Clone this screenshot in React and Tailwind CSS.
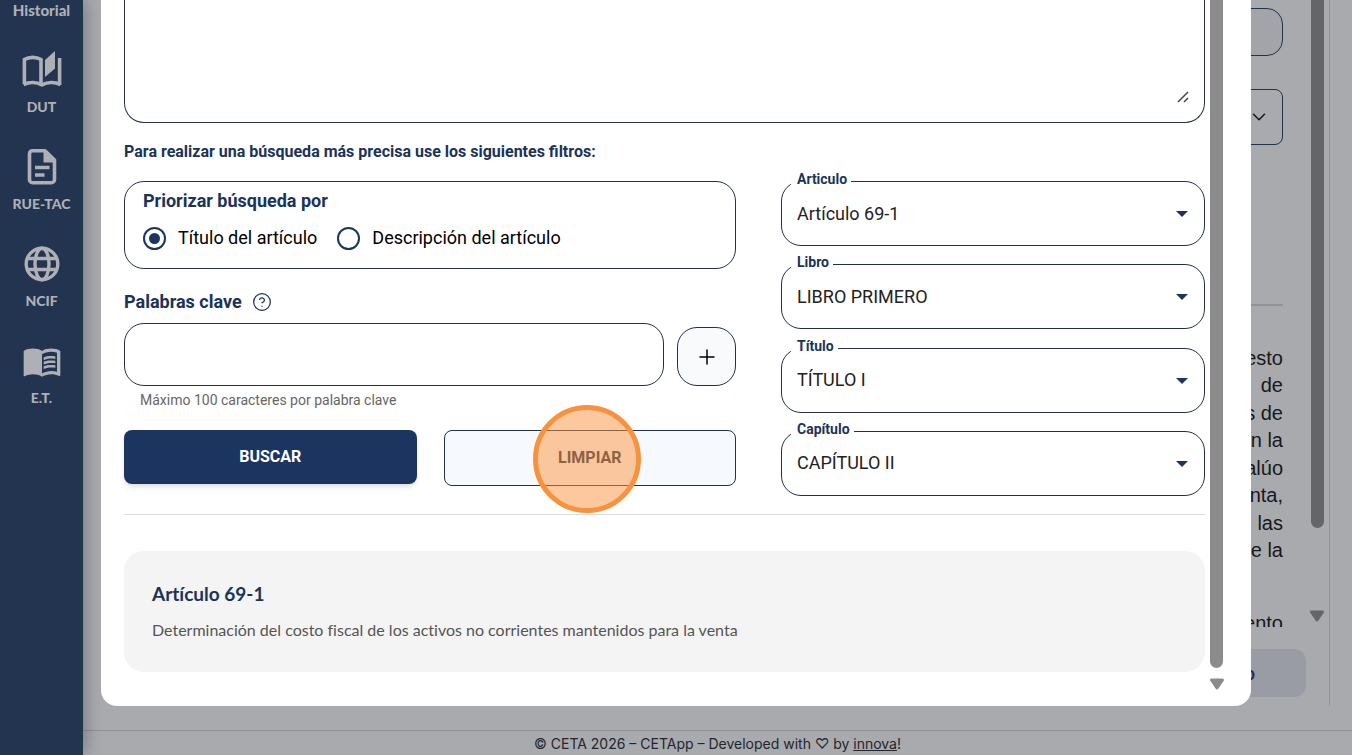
import { useState } from 'react'
import { Plus, ChevronDown, CircleQuestionMark } from 'lucide-react'
import { MdMenuBook } from 'react-icons/md'

// ─── Icons ───────────────────────────────────────────────────────────────────

function StoriesIcon({ size = 40 }) {
  return (
    <svg width={size} height={size} viewBox="0 0 40 40" fill="none" stroke="currentColor" strokeWidth="3.6">
      <path d="M2.4 34V9.6C7 6.6 14.5 6.6 19 9.6V33.6" />
      <path d="M1.5 34.6C7 31.6 14.5 31.8 20 34.8C25.5 31.8 33 31.6 38.5 34.6" />
      <path d="M37.6 35V8" />
      <path d="M33 1v17.5l-10 8.5V10z" fill="currentColor" stroke="none" />
    </svg>
  )
}

function DocumentIcon({ size = 40 }) {
  return (
    <svg width={size} height={size} viewBox="0 0 40 40" fill="none" stroke="currentColor" strokeWidth="3.6">
      <path d="M23 3.7H10.5A3 3 0 0 0 7.5 6.700v26a3 3 0 0 0 3 3h19a3 3 0 0 0 3-3V13z" strokeLinejoin="round" />
      <path d="M21.5 3v12.500h12V13l-10-10z" fill="currentColor" stroke="none" />
      <path d="M13 20.5h14.5M13 28h9.5" />
    </svg>
  )
}

function GlobeIcon({ size = 40 }) {
  return (
    <svg width={size} height={size} viewBox="0 0 40 40" fill="none" stroke="currentColor" strokeWidth="3.4">
      <circle cx="20" cy="20" r="15.8" />
      <ellipse cx="20" cy="20" rx="7" ry="15.8" />
      <path d="M5 14.500h30M5 25.500h30" />
    </svg>
  )
}

function ScrollArrow({ className }) {
  return (
    <svg width="16" height="12" viewBox="0 0 16 12" className={className}>
      <path d="M2.5 2h11L8 10z" fill="currentColor" stroke="currentColor" strokeWidth="3" strokeLinejoin="round" />
    </svg>
  )
}

// ─── Sidebar ─────────────────────────────────────────────────────────────────

const navItems = [
  { label: 'DUT', Icon: StoriesIcon },
  { label: 'RUE-TAC', Icon: DocumentIcon },
  { label: 'NCIF', Icon: GlobeIcon },
  { label: 'E.T.', Icon: MdMenuBook },
]

function Sidebar() {
  return (
    <nav className="w-[83px] flex-shrink-0 bg-[#22344f] text-[#aeb0b5] flex flex-col items-center gap-[30px] font-['Lato',sans-serif] font-black text-sm leading-5 shadow-[2px_0_16px_rgba(0,0,0,0.3)] z-10">
      <a href="#historial" className="text-[15px]">Historial</a>
      {navItems.map(({ label, Icon }) => (
        <a key={label} href={`#${label}`} className="flex flex-col items-center gap-[7px]">
          <Icon size={40} />
          <span>{label}</span>
        </a>
      ))}
    </nav>
  )
}

// ─── Page behind the dialog ──────────────────────────────────────────────────

const lines = ['impuesto', 'de', 'los de', 'en la', 'avalúo', 'venta,', 'las', 'de la']

function Page() {
  return (
    <div className="flex-1 min-w-0 flex flex-col">
      <main className="flex-1 min-h-0 mr-[22px] mb-6 border-r border-[#929397] flex flex-col">
        <div className="flex-1 min-h-0 flex">
          <div className="flex-1 min-w-0 overflow-hidden pt-2 pl-12 pr-[22px]">
            <input aria-label="Consulta" className="block w-full h-12 rounded-2xl border border-[#25324c] bg-[#a3a4a8]" />
            <button aria-label="Desplegar" className="mt-[33px] w-full h-14 rounded-lg border border-[#25324c] px-3 flex items-center justify-end text-[#1b1c20]">
              <ChevronDown size={22} strokeWidth={1.75} />
            </button>
            <hr className="mt-[159px] border-t-2 border-[#929397]" />
            <div className="mt-[40px] h-[216px] flex flex-col justify-between text-right font-['Liberation_Sans',sans-serif] text-xl leading-6 text-[#17181c]">
              {lines.map(line => <p key={line}>{line}</p>)}
            </div>
            <p className="mt-[49px] text-right font-['Liberation_Sans',sans-serif] text-xl leading-6 text-[#17181c]">momento</p>
          </div>
          <div className="w-6 flex flex-col items-center justify-between">
            <div className="w-[13px] h-[528px] rounded-b-full bg-[#646569]" />
            <ScrollArrow className="mb-[5px] text-[#646569]" />
          </div>
        </div>
        <div className="flex justify-end mt-[22px] mb-[9px] pr-[23px]">
          <button className="h-12 px-[51px] rounded-xl bg-[#9a9ca5] font-['Lato',sans-serif] font-bold text-lg text-[#1b3255]">Siguiente artículo</button>
        </div>
      </main>
      <footer className="h-[25px] border-t border-[#929397] text-center font-['Inter',sans-serif] text-sm leading-[26px] text-[#23262c]">
        © CETA 2026 – CETApp – Developed with ♡ by <a href="#innova" className="underline">innova</a>!
      </footer>
    </div>
  )
}

// ─── Dialog ──────────────────────────────────────────────────────────────────

function FilterSelect({ id, label, value }) {
  return (
    <div className="relative">
      <label htmlFor={id} className="absolute left-[10px] -top-3 pl-1.5 pr-1 bg-white text-sm leading-5 font-bold text-[#1b3358]">{label}</label>
      <select id={id} className="block w-full h-[65px] pl-[15px] pr-10 rounded-[20px] border border-[#22304a] bg-white text-lg text-[#222] appearance-none">
        <option>{value}</option>
      </select>
      <svg width="12" height="6" viewBox="0 0 12 6" className="absolute right-[17px] top-[30px] pointer-events-none">
        <path d="M0 0h12L6 6z" fill="#1b3560" />
      </svg>
    </div>
  )
}

function RadioOption({ label, checked, onChange }) {
  return (
    <label className="flex items-center gap-3 text-lg text-black">
      <input
        type="radio"
        name="prioridad"
        checked={checked}
        onChange={onChange}
        className="appearance-none w-[23px] h-[23px] rounded-full border-2 border-[#1b3560] p-[4px] bg-clip-content checked:bg-[#1b3560]"
      />
      {label}
    </label>
  )
}

function SearchDialog() {
  const [priority, setPriority] = useState('titulo')

  return (
    <div role="dialog" className="h-full bg-white rounded-b-2xl px-[23px] flex font-['Roboto',sans-serif]">
      <div className="flex-1 min-w-0">
        <div className="relative">
          <textarea aria-label="Consulta" className="block w-full h-[123px] rounded-b-[20px] border border-t-0 border-[#22304a] resize-none" />
          <svg width="12" height="12" viewBox="0 0 12 12" className="absolute right-4 bottom-5 pointer-events-none" stroke="#444" strokeWidth="1.5">
            <path d="M1 11L11 1M7 11l4-4" />
          </svg>
        </div>
        <p className="mt-[17px] text-base leading-6 font-bold text-[#1b3358]">Para realizar una búsqueda más precisa use los siguientes filtros:</p>

        <div className="mt-[17px] grid grid-cols-[612fr_424fr] gap-[45px]">
          <div>
            <div role="radiogroup" aria-labelledby="priorizar" className="h-[88px] rounded-[20px] border border-[#22304a] px-[18px] pt-[5px]">
              <p id="priorizar" className="text-lg leading-7 font-bold text-[#1b3358]">Priorizar búsqueda por</p>
              <div className="mt-[9px] flex gap-5">
                <RadioOption label="Título del artículo" checked={priority === 'titulo'} onChange={() => setPriority('titulo')} />
                <RadioOption label="Descripción del artículo" checked={priority === 'descripcion'} onChange={() => setPriority('descripcion')} />
              </div>
            </div>

            <div className="mt-[19px] flex items-center gap-2.5 text-[#1b3358]">
              <label htmlFor="palabras" className="text-lg leading-7 font-bold">Palabras clave</label>
              <CircleQuestionMark size={20} strokeWidth={1.5} />
            </div>
            <div className="mt-[7px] flex items-end gap-[13px]">
              <input id="palabras" className="flex-1 min-w-0 h-[63px] px-4 rounded-[20px] border border-[#22304a] text-lg" />
              <button aria-label="Agregar" className="w-[59px] h-[59px] rounded-[20px] border border-[#22304a] bg-[#f8fafc] flex items-center justify-center text-black">
                <Plus size={24} strokeWidth={1.5} />
              </button>
            </div>
            <p className="mt-1 px-4 text-sm leading-5 text-[#666]">Máximo 100 caracteres por palabra clave</p>

            <div className="mt-5 grid grid-cols-2 gap-[27px] font-bold text-base">
              <button className="h-[54px] rounded-lg bg-[#1b3560] text-white shadow-md">BUSCAR</button>
              <div className="relative">
                <button className="w-full h-14 rounded-lg border border-[#22304a] bg-[#f6fafe] text-[#22304a]">LIMPIAR</button>
                <span className="absolute left-[49%] top-[52%] -translate-x-1/2 -translate-y-1/2 w-[108px] h-[108px] rounded-full border-[5px] border-[#f7923e] bg-[#fb923c]/50 pointer-events-none" />
              </div>
            </div>
          </div>

          <div className="h-[315px] flex flex-col justify-between">
            <FilterSelect id="articulo" label="Articulo" value="Artículo 69-1" />
            <FilterSelect id="libro" label="Libro" value="LIBRO PRIMERO" />
            <FilterSelect id="titulo" label="Título" value="TÍTULO I" />
            <FilterSelect id="capitulo" label="Capítulo" value="CAPÍTULO II" />
          </div>
        </div>

        <hr className="mt-[18px] border-[#dcdcdc]" />

        <article className="mt-9 rounded-[20px] bg-[#f4f4f4] px-7 pt-[27px] pb-[30px] font-['Lato',sans-serif] [font-variant-ligatures:none]">
          <h2 className="text-[19px] leading-8 font-bold text-[#1b3358]">Artículo 69-1</h2>
          <p className="mt-2 text-base leading-6 text-[#555]">Determinación del costo fiscal de los activos no corrientes mantenidos para la venta</p>
        </article>
      </div>

      <div className="w-[23px] h-full flex flex-col items-center">
        <div className="w-[13px] flex-1 rounded-b-full bg-[#8b8b8b]" />
        <ScrollArrow className="mt-[10px] mb-4 text-[#8b8b8b]" />
      </div>
    </div>
  )
}

export default function App() {
  return (
    <div className="relative h-screen overflow-hidden bg-[#a9aaae] flex">
      <Sidebar />
      <Page />
      <div className="absolute inset-0 z-20 px-[101px] pb-[49px]">
        <SearchDialog />
      </div>
    </div>
  )
}
